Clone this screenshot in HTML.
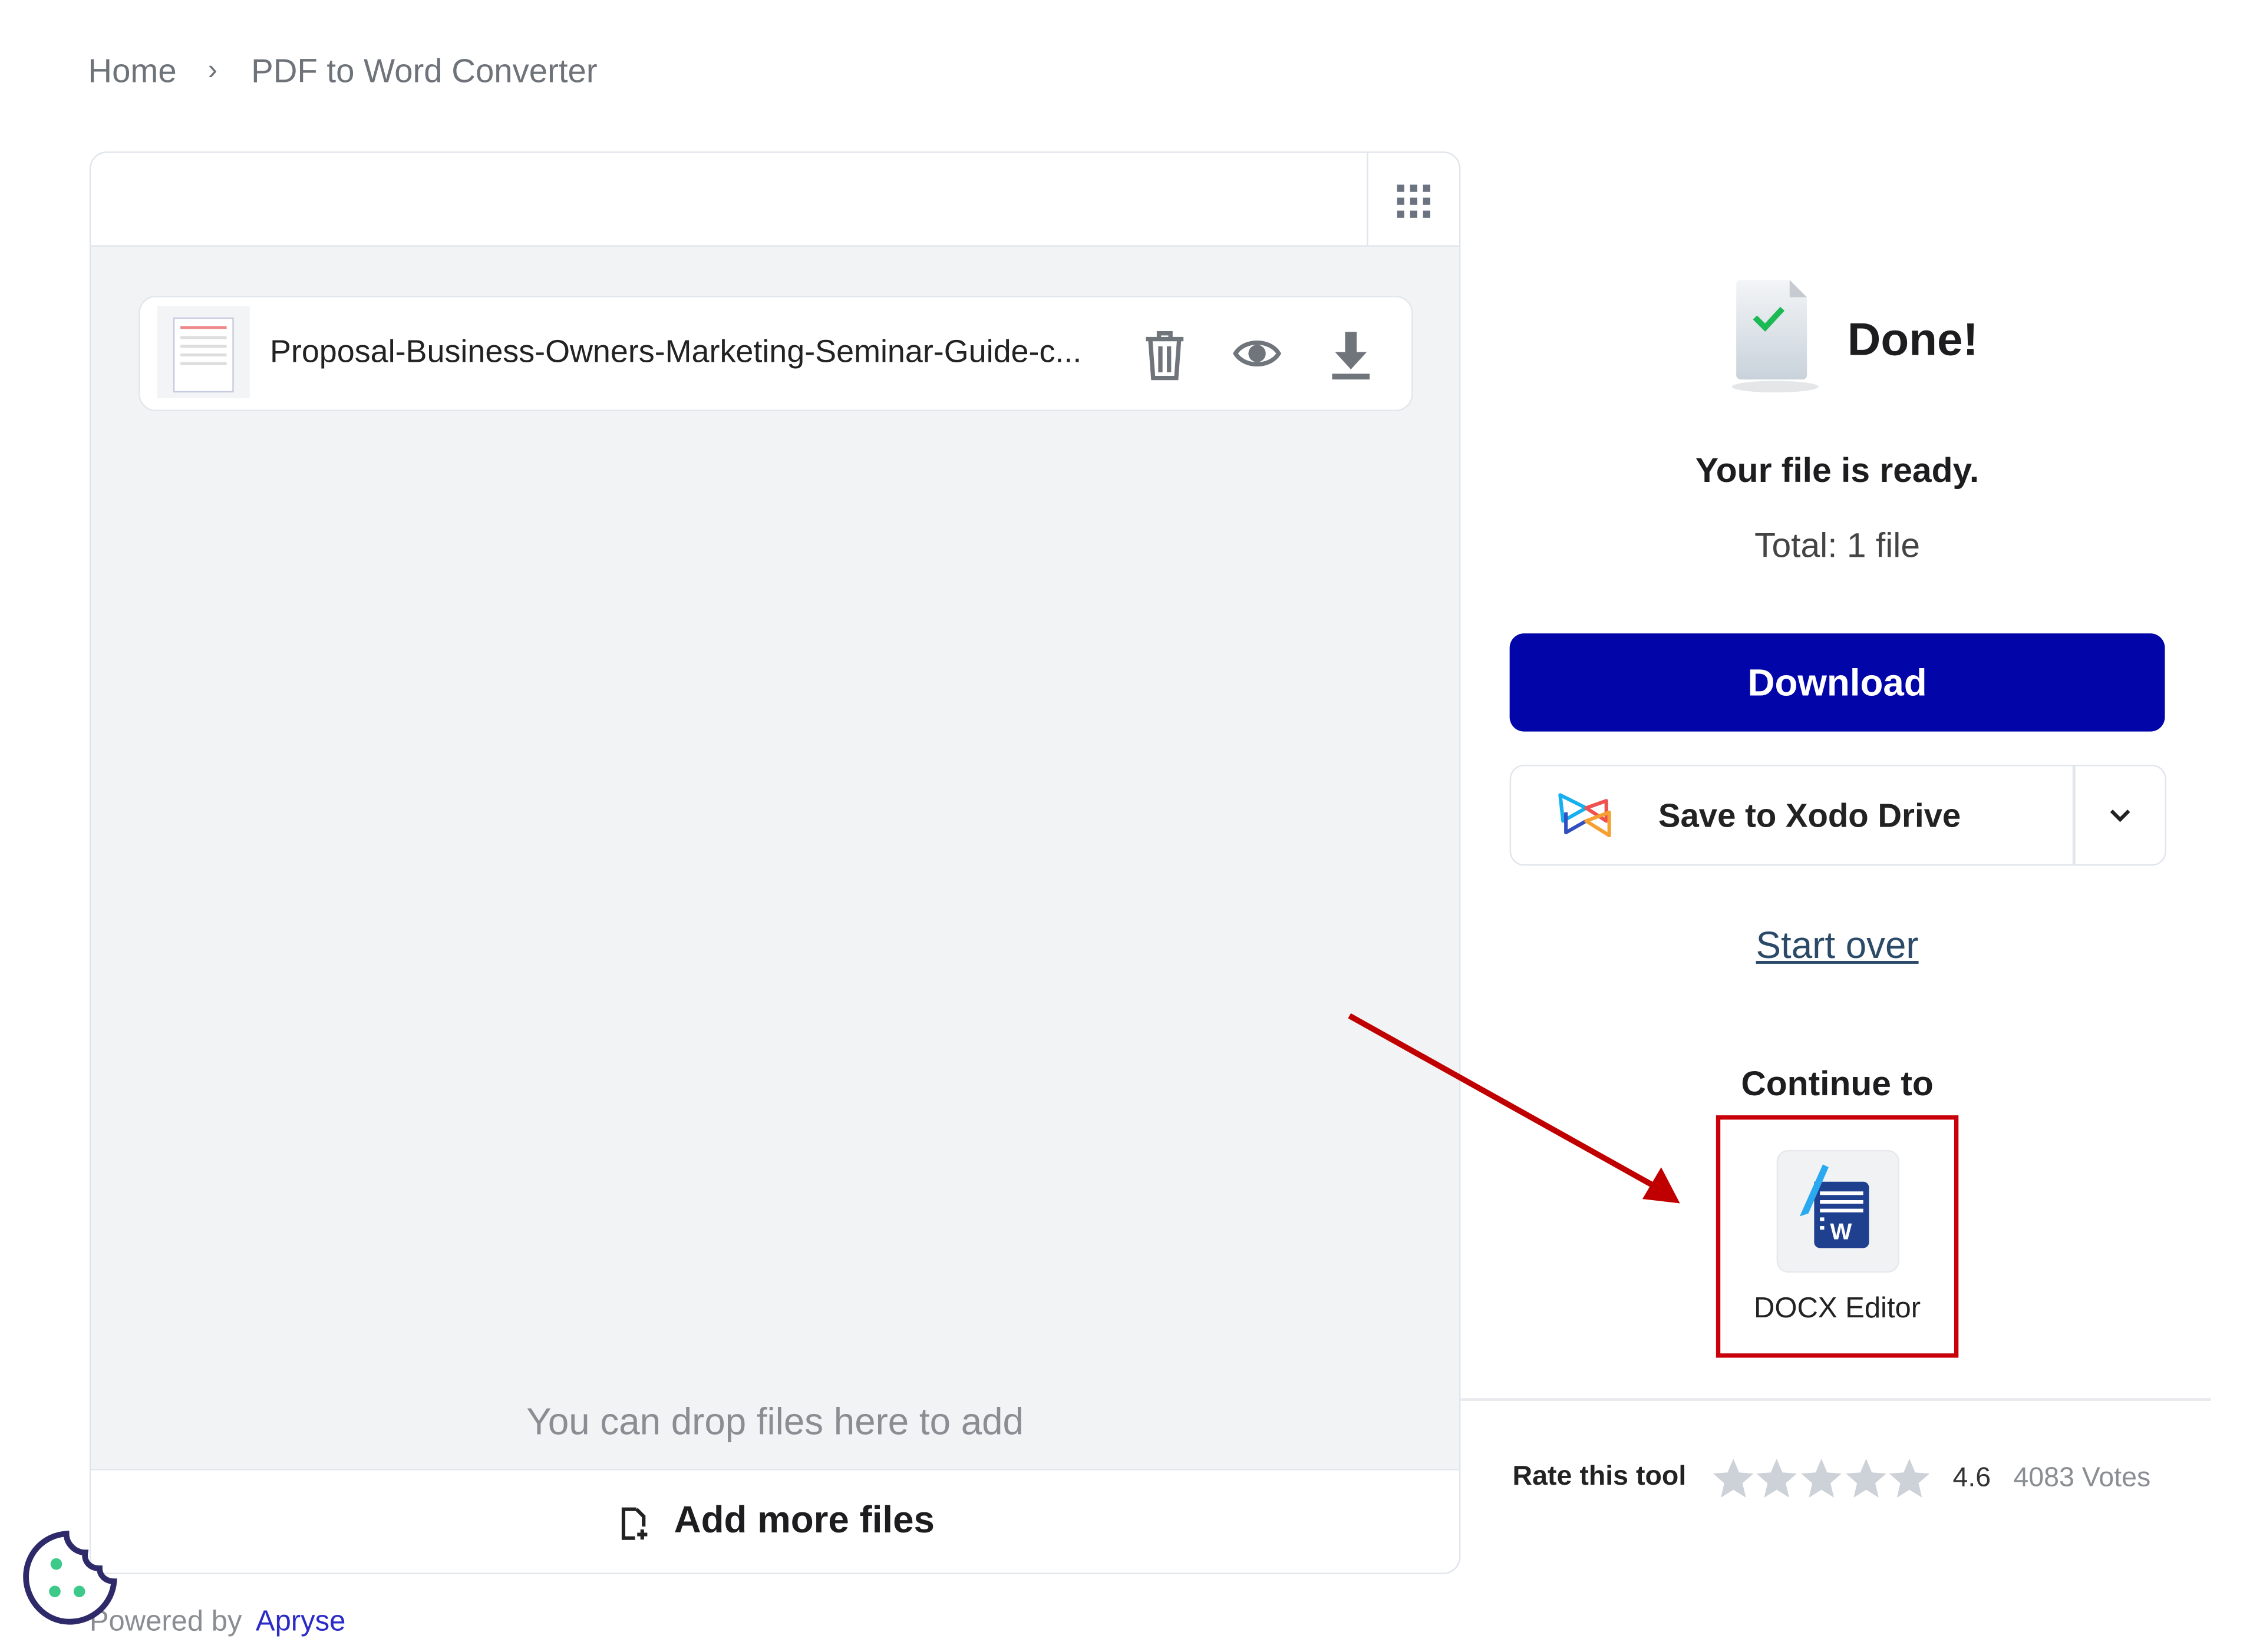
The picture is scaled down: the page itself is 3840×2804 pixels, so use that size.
<!DOCTYPE html>
<html><head><meta charset="utf-8"><style>
html,body{margin:0;padding:0;background:#fff;overflow:hidden}
body{width:3840px;height:2804px}
#w{position:absolute;left:0;top:0;width:1568px;height:1145px;transform:scale(2.449);transform-origin:0 0;font-family:"Liberation Sans",sans-serif;color:#1d1d1f}
.a{position:absolute;white-space:nowrap}
</style></head><body><div id="w">
<div class="a" style="left:61px;top:36px;font-size:23px;color:#6e737a">Home</div>
<div class="a" style="left:144px;top:38px;font-size:20px;color:#6e737a">›</div>
<div class="a" style="left:174px;top:36px;font-size:23px;color:#6e737a">PDF to Word Converter</div>

<div class="a" style="left:62px;top:105px;width:948px;height:984px;border:1px solid #e1e5ec;border-radius:12px;overflow:hidden;background:#f2f3f5">
 <div class="a" style="left:0;top:0;width:948px;height:64px;background:#fff;border-bottom:1px solid #e1e5ec"></div>
 <div class="a" style="left:884px;top:0;width:1px;height:64px;background:#e1e5ec"></div>
 <svg class="a" style="left:904px;top:21px" width="26" height="26" viewBox="0 0 26 26" fill="#6b7280"><rect x="1" y="1" width="5" height="5"/><rect x="10" y="1" width="5" height="5"/><rect x="19" y="1" width="5" height="5"/><rect x="1" y="10" width="5" height="5"/><rect x="10" y="10" width="5" height="5"/><rect x="19" y="10" width="5" height="5"/><rect x="1" y="19" width="5" height="5"/><rect x="10" y="19" width="5" height="5"/><rect x="19" y="19" width="5" height="5"/></svg>
 <div class="a" style="left:33px;top:99px;width:881px;height:78px;background:#fff;border:1px solid #e3e6ea;border-radius:12px">
  <div class="a" style="left:12px;top:6px;width:64px;height:64px;background:#f3f4f6"></div>
  <div class="a" style="left:23px;top:14px;width:40px;height:50px;background:#fff;border:1px solid #c8cbe0">
   <div style="margin:5px 4px;height:2px;background:#e88"></div>
   <div style="margin:4px 4px;height:2px;background:#ddd"></div><div style="margin:4px 4px;height:2px;background:#ddd"></div><div style="margin:4px 4px;height:2px;background:#ddd"></div><div style="margin:4px 4px;height:2px;background:#ddd"></div>
  </div>
  <div class="a" style="left:90px;top:25px;font-size:22px;color:#222">Proposal-Business-Owners-Marketing-Seminar-Guide-c...</div>
  <svg class="a" style="left:695px;top:22px" width="30" height="36" viewBox="0 0 30 36" fill="none" stroke="#70757c" stroke-width="3"><path d="M2 7h26M11 7V3h8v4M5 7l2 27h16l2-27M12 12v18M18 12v18"/></svg>
  <svg class="a" style="left:757px;top:26px" width="34" height="26" viewBox="0 0 34 26"><path d="M2 13C8 3 26 3 32 13C26 23 8 23 2 13Z" fill="none" stroke="#70757c" stroke-width="3"/><circle cx="17" cy="13" r="6" fill="#70757c"/></svg>
  <svg class="a" style="left:825px;top:22px" width="28" height="36" viewBox="0 0 28 36" fill="#70757c"><rect x="10" y="2" width="8" height="16"/><path d="M3 16h22L14 28Z"/><rect x="1" y="31" width="26" height="4"/></svg>
 </div>
 <div class="a" style="left:0;top:864px;width:948px;text-align:center;font-size:26px;color:#8a8d92">You can drop files here to add</div>
 <div class="a" style="left:0;top:912px;width:948px;height:72px;background:#fff;border-top:1px solid #e1e5ec"></div>
 <svg class="a" style="left:366px;top:938px" width="20" height="24" viewBox="0 0 20 24" fill="none" stroke="#222" stroke-width="2.5"><path d="M12 2H3v20h8M12 2l5 5v7M16 16v7M12.5 19.5h7"/></svg>
 <div class="a" style="left:404px;top:932px;font-size:26px;font-weight:bold;color:#1d1d1f">Add more files</div>
</div>

<svg class="a" style="left:1198px;top:190px" width="70" height="85" viewBox="0 0 70 85"><defs><linearGradient id="g" x1="0" y1="0" x2="0" y2="1"><stop offset="0" stop-color="#f3f5f7"/><stop offset="1" stop-color="#c9d2db"/></linearGradient></defs><ellipse cx="32" cy="78" rx="30" ry="4" fill="#e4e6e8"/><path d="M8 4h34l12 12v54a3 3 0 0 1-3 3H8a3 3 0 0 1-3-3V7a3 3 0 0 1 3-3Z" fill="url(#g)"/><path d="M42 4v12h12Z" fill="#c5cbd1"/><path d="M18 30l7 7 12-13" fill="none" stroke="#1db954" stroke-width="4"/></svg>
<div class="a" style="left:1280px;top:217px;font-size:32px;font-weight:bold;color:#1d1d1f">Done!</div>
<div class="a" style="left:1046px;top:313px;width:454px;text-align:center;font-size:24px;font-weight:bold">Your file is ready.</div>
<div class="a" style="left:1046px;top:365px;width:454px;text-align:center;font-size:24px;color:#444">Total: 1 file</div>
<div class="a" style="left:1046px;top:439px;width:454px;height:68px;background:#0206a8;border-radius:10px;color:#fff;font-weight:bold;font-size:26px;text-align:center;line-height:68px">Download</div>
<div class="a" style="left:1046px;top:530px;width:453px;height:68px;border:1px solid #e1e5ec;border-radius:10px">
 <div class="a" style="left:389px;top:0;width:2px;height:68px;background:#e1e5ec"></div>
 <svg class="a" style="left:32px;top:18px" width="40" height="32" viewBox="0 0 40 32" fill="none" stroke-width="2.5" stroke-linejoin="round"><path d="M2 2l18 9-16 9Z" stroke="#16b0f0"/><path d="M6 14v14l14-8" stroke="#3050c0"/><path d="M20 11l14-5v14Z" stroke="#f05050"/><path d="M20 20l16-6v16Z" stroke="#f5a030"/></svg>
 <div class="a" style="left:102px;top:21px;font-size:23px;font-weight:bold;color:#222">Save to Xodo Drive</div>
 <svg class="a" style="left:414px;top:28px" width="16" height="12" viewBox="0 0 16 12" fill="none" stroke="#222" stroke-width="2.5"><path d="M2 3l6 6 6-6"/></svg>
</div>
<div class="a" style="left:1046px;top:640px;width:454px;text-align:center;font-size:26px;color:#2b4a68;text-decoration:underline">Start over</div>

<svg class="a" style="left:0;top:0" width="1568" height="1145"><line x1="935" y1="704" x2="1148" y2="823" stroke="#c00000" stroke-width="4"/><path d="M1164 834L1138 831L1151 809Z" fill="#c00000"/><line x1="1012" y1="970" x2="1532" y2="970" stroke="#e8eaee" stroke-width="2"/></svg>

<div class="a" style="left:1046px;top:738px;width:454px;text-align:center;font-size:24px;font-weight:bold">Continue to</div>
<div class="a" style="left:1189px;top:773px;width:162px;height:162px;border:3px solid #c8000a"></div>
<div class="a" style="left:1231px;top:797px;width:83px;height:83px;background:#f0f2f4;border-radius:8px;border:1px solid #e6e8eb"></div>
<svg class="a" style="left:1245px;top:805px" width="55" height="65" viewBox="0 0 55 65"><path d="M12 14h34a4 4 0 0 1 4 4v38a4 4 0 0 1-4 4H16a4 4 0 0 1-4-4Z" fill="#1f3f8f"/><path d="M16 22h30M16 28h30M16 34h30" stroke="#fff" stroke-width="2.5"/><path d="M16 40h3M16 46h3" stroke="#fff" stroke-width="2.5"/><text x="23" y="54" font-family="Liberation Sans" font-weight="bold" font-size="16" fill="#fff">W</text><path d="M2 38L18 2l4 2L8 36" fill="#2aa8f0"/></svg>
<div class="a" style="left:1189px;top:896px;width:168px;text-align:center;font-size:20px;color:#222">DOCX Editor</div>

<div class="a" style="left:1048px;top:1013px;font-size:19px;font-weight:bold;color:#222">Rate this tool</div>
<svg class="a" style="left:1186px;top:1010px" width="152" height="30" viewBox="0 0 152 30" fill="#cdd1d8"><g id="s"><path d="M15 1l4 9.5 10 .8-7.7 6.6 2.4 10L15 22.5 6.3 28l2.4-10L1 11.3l10-.8Z"/></g><use href="#s" x="30"/><use href="#s" x="61"/><use href="#s" x="92"/><use href="#s" x="122"/></svg>
<div class="a" style="left:1353px;top:1014px;font-size:19px;color:#333">4.6</div>
<div class="a" style="left:1395px;top:1014px;font-size:19px;color:#8a8d92">4083 Votes</div>

<div class="a" style="left:62px;top:1113px;font-size:20px;color:#8a8d92">Powered by <span style="color:#2b2bc8;margin-left:4px">Apryse</span></div>
<svg class="a" style="left:14px;top:1060px" width="70" height="68" viewBox="0 0 70 68"><path d="M32 3C16 4 4 17 4 33s13 31 30 31 30-13 31-28c-6 0-10-4-10-9-7 0-11-5-10-11-7 0-13-6-13-13Z" fill="#fff" stroke="#2e2a6a" stroke-width="4"/><circle cx="25" cy="24" r="4" fill="#3cc98a"/><circle cx="24" cy="43" r="4" fill="#3cc98a"/><circle cx="41" cy="43" r="4" fill="#3cc98a"/></svg>
</div></body></html>
